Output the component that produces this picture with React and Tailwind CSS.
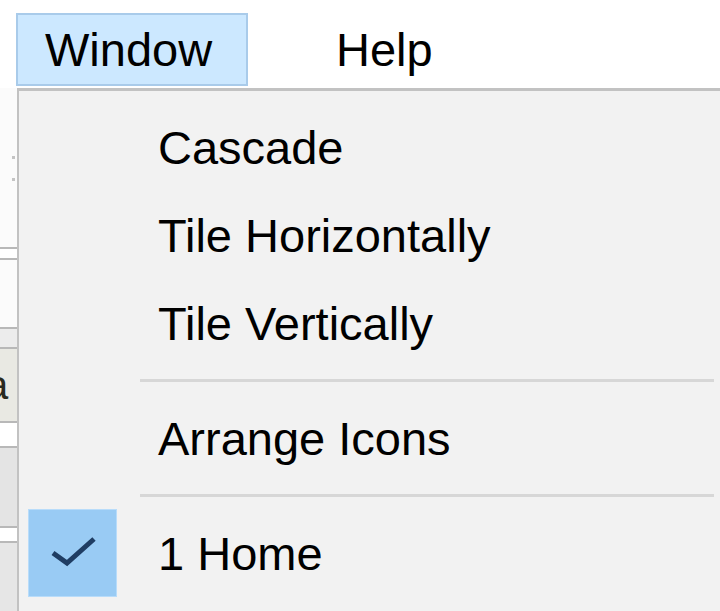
const items = [
  { type: "item", label: "Cascade" },
  { type: "item", label: "Tile Horizontally" },
  { type: "item", label: "Tile Vertically" },
  { type: "sep" },
  { type: "item", label: "Arrange Icons" },
  { type: "sep" },
  { type: "item", label: "1 Home", checked: true },
];

function CheckMark() {
  return (
    <svg width="89" height="88" viewBox="0 0 89 88" className="block">
      <polyline points="24,43 38,53 65,29" fill="none" stroke="#1f3d63" strokeWidth="5" strokeLinejoin="miter" />
    </svg>
  );
}

function BackgroundStrip() {
  return (
    <div className="flex w-[17px] shrink-0 flex-col bg-[#fbfbfb]">
      <div className="h-[68px]" />
      <div className="ml-[12px] h-[3px] w-[3px] bg-[#c4c4c4]" />
      <div className="h-[19px]" />
      <div className="ml-[12px] h-[3px] w-[3px] bg-[#c4c4c4]" />
      <div className="h-[66px]" />
      <div className="h-[2px] bg-[#b8b8b8]" />
      <div className="h-[9px] bg-white" />
      <div className="h-[2px] bg-[#b8b8b8]" />
      <div className="h-[67px]" />
      <div className="h-[2px] bg-[#b8b8b8]" />
      <div className="h-[18px] bg-[#ececec]" />
      <div className="h-[2px] bg-[#b8b8b8]" />
      <div className="flex h-[72px] items-center overflow-hidden bg-[#e9e9e3]">
        <span className="-ml-[14px] text-[40px] leading-none text-[#2a2a1e]">a</span>
      </div>
      <div className="h-[2px] bg-[#b8b8b8]" />
      <div className="h-[23px] bg-white" />
      <div className="h-[2px] bg-[#b8b8b8]" />
      <div className="h-[78px] bg-[#e4e4e4]" />
      <div className="h-[2px] bg-[#b8b8b8]" />
      <div className="h-[13px] bg-white" />
      <div className="h-[2px] bg-[#b8b8b8]" />
      <div className="flex-1 bg-[#e6e6e6]" />
    </div>
  );
}

export default function App() {
  return (
    <div
      className="flex h-[611px] w-[720px] flex-col overflow-hidden bg-white text-[47px] leading-none text-black"
      style={{ fontFamily: '"Liberation Sans", Arial, sans-serif' }}
    >
      <div className="flex h-[88px] shrink-0 items-start bg-white">
        <div className="ml-[16px] mt-[13px] flex h-[73px] w-[232px] items-center border-2 border-[#a9cbea] bg-[#cce8ff] pl-[27px]">
          Window
        </div>
        <div className="ml-[88px] mt-[13px] flex h-[73px] items-center">Help</div>
      </div>

      <div className="flex min-h-0 flex-1">
        <BackgroundStrip />
        <div className="flex flex-1 flex-col border-l-2 border-t-[3px] border-[#c2c2c2] bg-[#f2f2f2] pt-[12px]">
          {items.map((item, index) =>
            item.type === "sep" ? (
              <div key={index} className="flex h-[27px] items-center pl-[121px] pr-[6px]">
                <div className="h-[3px] flex-1 bg-[#d7d7d7]" />
              </div>
            ) : (
              <div key={index} className="flex h-[88px] items-center">
                <div className="ml-[9px] w-[89px]">
                  {item.checked ? (
                    <div className="h-[88px] w-[89px] border border-[#b8dcfa] bg-[#99cbf4]">
                      <CheckMark />
                    </div>
                  ) : null}
                </div>
                <span className="ml-[41px]">{item.label}</span>
              </div>
            )
          )}
        </div>
      </div>
    </div>
  );
}
